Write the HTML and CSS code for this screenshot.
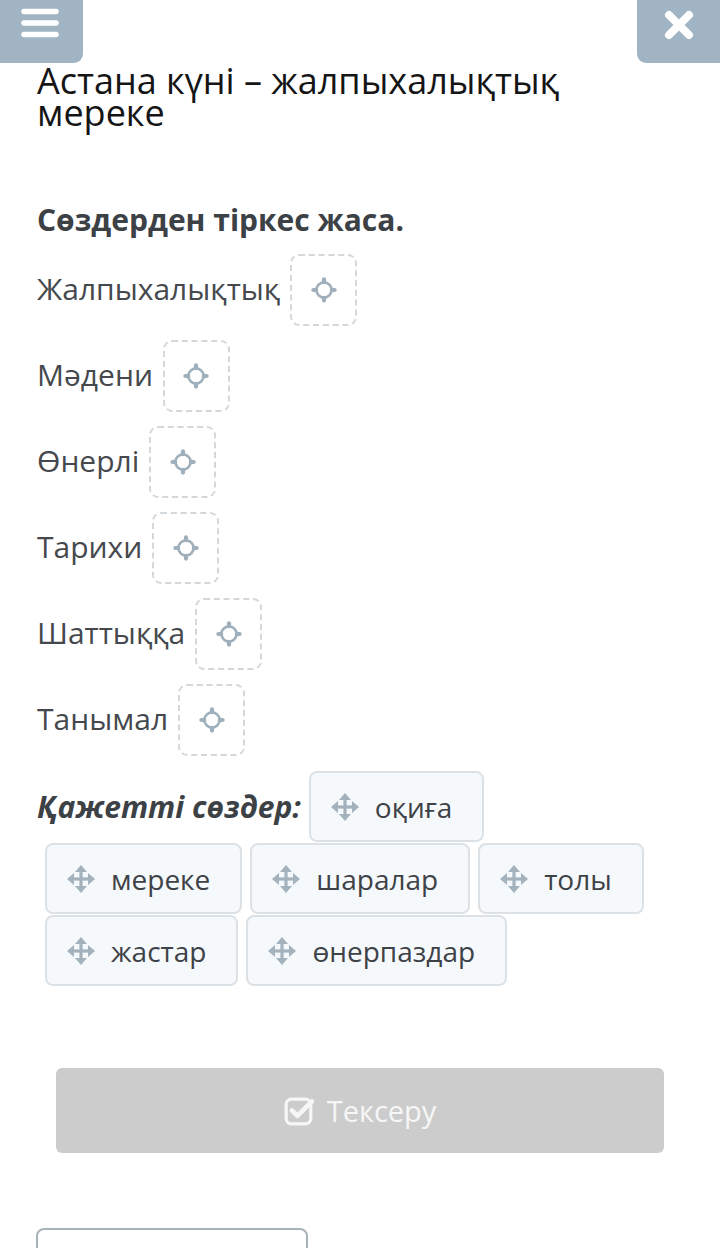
FILE: index.html
```html
<!DOCTYPE html>
<html lang="kk">
<head>
<meta charset="utf-8">
<title>Астана күні</title>
<link rel="stylesheet" href="styles.css">
</head>
<body>
<div class="topbar">
  <div class="tb-btn tb-left">
    <svg width="38" height="30" viewBox="0 0 38 30"><g stroke="#fff" stroke-width="5.5" stroke-linecap="round"><line x1="3" y1="3.5" x2="35" y2="3.5"/><line x1="3" y1="15" x2="35" y2="15"/><line x1="3" y1="26.5" x2="35" y2="26.5"/></g></svg>
  </div>
  <div class="tb-btn tb-right">
    <svg width="30" height="30" viewBox="0 0 30 30"><g stroke="#fff" stroke-width="8" stroke-linecap="round"><line x1="5" y1="5" x2="25" y2="25"/><line x1="25" y1="5" x2="5" y2="25"/></g></svg>
  </div>
</div>
<main class="content">
  <h1 class="title">Астана күні – жалпыхалықтық мереке</h1>
  <h2 class="task">Сөздерден тіркес жаса.</h2>

  <div class="row"><span class="label">Жалпыхалықтық</span><span class="drop"><svg class="target" viewBox="0 0 26 26"><circle cx="13" cy="13" r="7.6" fill="none" stroke="currentColor" stroke-width="2.7"/><g stroke="currentColor" stroke-width="4.2" stroke-linecap="round"><line x1="13" y1="2.4" x2="13" y2="5.2"/><line x1="13" y1="20.8" x2="13" y2="23.6"/><line x1="2.4" y1="13" x2="5.2" y2="13"/><line x1="20.8" y1="13" x2="23.6" y2="13"/></g></svg></span></div>
  <div class="row"><span class="label">Мәдени</span><span class="drop"><svg class="target" viewBox="0 0 26 26"><circle cx="13" cy="13" r="7.6" fill="none" stroke="currentColor" stroke-width="2.7"/><g stroke="currentColor" stroke-width="4.2" stroke-linecap="round"><line x1="13" y1="2.4" x2="13" y2="5.2"/><line x1="13" y1="20.8" x2="13" y2="23.6"/><line x1="2.4" y1="13" x2="5.2" y2="13"/><line x1="20.8" y1="13" x2="23.6" y2="13"/></g></svg></span></div>
  <div class="row"><span class="label">Өнерлі</span><span class="drop"><svg class="target" viewBox="0 0 26 26"><circle cx="13" cy="13" r="7.6" fill="none" stroke="currentColor" stroke-width="2.7"/><g stroke="currentColor" stroke-width="4.2" stroke-linecap="round"><line x1="13" y1="2.4" x2="13" y2="5.2"/><line x1="13" y1="20.8" x2="13" y2="23.6"/><line x1="2.4" y1="13" x2="5.2" y2="13"/><line x1="20.8" y1="13" x2="23.6" y2="13"/></g></svg></span></div>
  <div class="row"><span class="label">Тарихи</span><span class="drop"><svg class="target" viewBox="0 0 26 26"><circle cx="13" cy="13" r="7.6" fill="none" stroke="currentColor" stroke-width="2.7"/><g stroke="currentColor" stroke-width="4.2" stroke-linecap="round"><line x1="13" y1="2.4" x2="13" y2="5.2"/><line x1="13" y1="20.8" x2="13" y2="23.6"/><line x1="2.4" y1="13" x2="5.2" y2="13"/><line x1="20.8" y1="13" x2="23.6" y2="13"/></g></svg></span></div>
  <div class="row"><span class="label">Шаттыққа</span><span class="drop"><svg class="target" viewBox="0 0 26 26"><circle cx="13" cy="13" r="7.6" fill="none" stroke="currentColor" stroke-width="2.7"/><g stroke="currentColor" stroke-width="4.2" stroke-linecap="round"><line x1="13" y1="2.4" x2="13" y2="5.2"/><line x1="13" y1="20.8" x2="13" y2="23.6"/><line x1="2.4" y1="13" x2="5.2" y2="13"/><line x1="20.8" y1="13" x2="23.6" y2="13"/></g></svg></span></div>
  <div class="row"><span class="label">Танымал</span><span class="drop"><svg class="target" viewBox="0 0 26 26"><circle cx="13" cy="13" r="7.6" fill="none" stroke="currentColor" stroke-width="2.7"/><g stroke="currentColor" stroke-width="4.2" stroke-linecap="round"><line x1="13" y1="2.4" x2="13" y2="5.2"/><line x1="13" y1="20.8" x2="13" y2="23.6"/><line x1="2.4" y1="13" x2="5.2" y2="13"/><line x1="20.8" y1="13" x2="23.6" y2="13"/></g></svg></span></div>

  <div class="words">
    <span class="words-label">Қажетті сөздер:</span>
    <span class="chip"><svg class="move" viewBox="0 0 28 28"><g fill="currentColor"><rect x="12.4" y="5" width="3.2" height="18"/><rect x="5" y="12.4" width="18" height="3.2"/><path d="M14 0 L20 7 H8 Z"/><path d="M14 28 L20 21 H8 Z"/><path d="M0 14 L7 8 V20 Z"/><path d="M28 14 L21 8 V20 Z"/></g></svg>оқиға</span>
    <span class="chip"><svg class="move" viewBox="0 0 28 28"><g fill="currentColor"><rect x="12.4" y="5" width="3.2" height="18"/><rect x="5" y="12.4" width="18" height="3.2"/><path d="M14 0 L20 7 H8 Z"/><path d="M14 28 L20 21 H8 Z"/><path d="M0 14 L7 8 V20 Z"/><path d="M28 14 L21 8 V20 Z"/></g></svg>мереке</span>
    <span class="chip"><svg class="move" viewBox="0 0 28 28"><g fill="currentColor"><rect x="12.4" y="5" width="3.2" height="18"/><rect x="5" y="12.4" width="18" height="3.2"/><path d="M14 0 L20 7 H8 Z"/><path d="M14 28 L20 21 H8 Z"/><path d="M0 14 L7 8 V20 Z"/><path d="M28 14 L21 8 V20 Z"/></g></svg>шаралар</span>
    <span class="chip"><svg class="move" viewBox="0 0 28 28"><g fill="currentColor"><rect x="12.4" y="5" width="3.2" height="18"/><rect x="5" y="12.4" width="18" height="3.2"/><path d="M14 0 L20 7 H8 Z"/><path d="M14 28 L20 21 H8 Z"/><path d="M0 14 L7 8 V20 Z"/><path d="M28 14 L21 8 V20 Z"/></g></svg>толы</span>
    <span class="chip"><svg class="move" viewBox="0 0 28 28"><g fill="currentColor"><rect x="12.4" y="5" width="3.2" height="18"/><rect x="5" y="12.4" width="18" height="3.2"/><path d="M14 0 L20 7 H8 Z"/><path d="M14 28 L20 21 H8 Z"/><path d="M0 14 L7 8 V20 Z"/><path d="M28 14 L21 8 V20 Z"/></g></svg>жастар</span>
    <span class="chip"><svg class="move" viewBox="0 0 28 28"><g fill="currentColor"><rect x="12.4" y="5" width="3.2" height="18"/><rect x="5" y="12.4" width="18" height="3.2"/><path d="M14 0 L20 7 H8 Z"/><path d="M14 28 L20 21 H8 Z"/><path d="M0 14 L7 8 V20 Z"/><path d="M28 14 L21 8 V20 Z"/></g></svg>өнерпаздар</span>
  </div>

  <div class="check-wrap">
    <button class="check" type="button"><svg class="check-icon" viewBox="0 0 28 28"><rect x="2" y="3" width="23" height="23" rx="5" fill="none" stroke="currentColor" stroke-width="3"/><path d="M7.5 13.5 L12.5 18.5 L26 5" fill="none" stroke="currentColor" stroke-width="4.4" stroke-linecap="round" stroke-linejoin="round"/></svg>Тексеру</button>
  </div>

  <div class="bottom-box"></div>
</main>
</body>
</html>
```

FILE: styles.css
```css
* { box-sizing: border-box; }
html, body { margin: 0; padding: 0; background: #fff; }
body {
  font-family: "Open Sans", "Noto Sans", sans-serif;
  color: #3e4247;
  overflow: hidden;
  height: 1248px;
}
.topbar {
  display: flex;
  justify-content: space-between;
  height: 63px;
}
.tb-btn {
  width: 83px;
  height: 63px;
  background: #a0b4c3;
  display: flex;
  align-items: center;
  justify-content: center;
}
.tb-left { border-bottom-right-radius: 9px; padding-bottom: 18px; padding-right: 4px; }
.tb-right { border-bottom-left-radius: 9px; padding-bottom: 14px; }
.content { padding: 0 37px; }
.title {
  margin: 2px 0 0;
  font-size: 36px;
  line-height: 32px;
  font-weight: 400;
  color: #151515;
}
.task {
  margin: 71px 0 0;
  font-size: 30px;
  line-height: 40px;
  font-weight: 700;
  color: #3c4146;
}
.row {
  display: flex;
  align-items: center;
  gap: 10px;
  margin-top: 14px;
}
.label {
  font-size: 30px;
  color: #45494d;
  margin-top: -3px;
}
.drop {
  width: 67px;
  height: 72px;
  border: 2px dashed #d3d8dc;
  border-radius: 9px;
  display: flex;
  align-items: center;
  justify-content: center;
  color: #9fb0bc;
}
.target { width: 26px; height: 26px; }
.words {
  display: flex;
  flex-wrap: wrap;
  align-items: center;
  margin-top: 15px;
  row-gap: 1px;
}
.words-label {
  font-size: 30px;
  font-weight: 700;
  font-style: italic;
  color: #3c4146;
}
.chip {
  display: inline-flex;
  align-items: center;
  height: 71px;
  margin-left: 8px;
  padding: 0 30px 0 20px;
  border: 2px solid #dbe1e5;
  border-radius: 8px;
  background: #f5f9fc;
  font-size: 28px;
  color: #3e4247;
}
.move { width: 28px; height: 28px; color: #a3b2bd; margin-right: 16px; }
.check-wrap { padding: 0 19px; margin-top: 82px; }
.check {
  width: 100%;
  height: 85px;
  border: none;
  border-radius: 6px;
  background: #cccccc;
  color: #f6f6f6;
  font-family: "Open Sans", sans-serif;
  font-size: 29px;
  display: flex;
  align-items: center;
  justify-content: center;
  gap: 13px;
}
.check-icon { width: 30px; height: 30px; }
.bottom-box {
  margin-top: 75px;
  margin-left: -1px;
  width: 272px;
  height: 60px;
  border: 2px solid #a8b3b9;
  border-radius: 8px;
}
```
